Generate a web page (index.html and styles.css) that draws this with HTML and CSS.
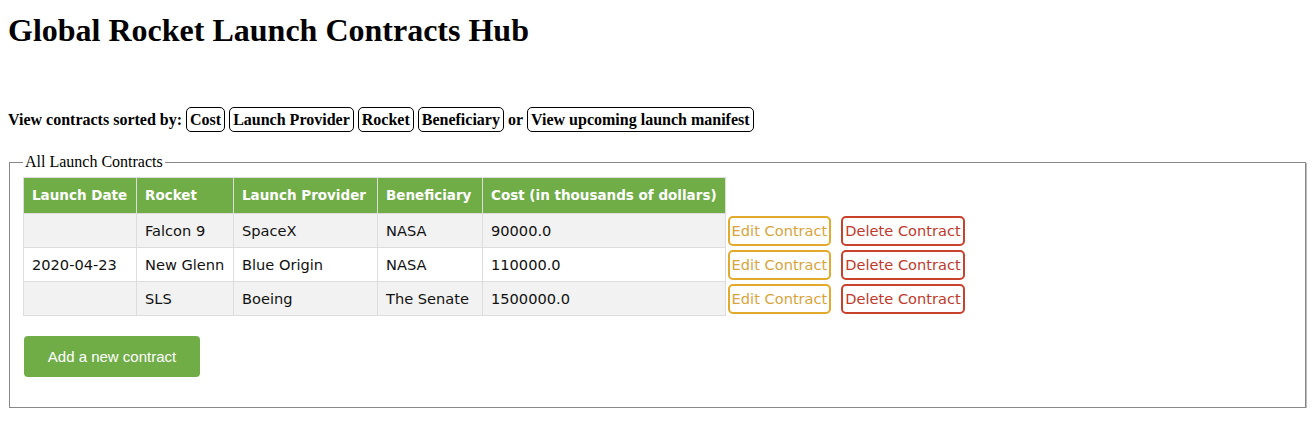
FILE: index.html
```html
<!DOCTYPE html>
<html>
<head>
<meta charset="utf-8">
<title>Global Rocket Launch Contracts Hub</title>
<link rel="stylesheet" href="styles.css">
</head>
<body>
<h1 class="title">Global Rocket Launch Contracts Hub</h1>
<div class="sortbar">
  <span class="label">View contracts sorted by:</span>
  <button class="sort">Cost</button>
  <button class="sort">Launch Provider</button>
  <button class="sort">Rocket</button>
  <button class="sort">Beneficiary</button>
  <span class="label">or</span>
  <button class="sort">View upcoming launch manifest</button>
</div>
<fieldset class="panel">
  <legend class="legend">All Launch Contracts</legend>
  <table class="contracts">
    <thead>
      <tr>
        <th class="c-date">Launch Date</th>
        <th class="c-rocket">Rocket</th>
        <th class="c-provider">Launch Provider</th>
        <th class="c-benef">Beneficiary</th>
        <th class="c-cost">Cost (in thousands of dollars)</th>
        <th class="blank"></th>
      </tr>
    </thead>
    <tbody>
      <tr class="odd">
        <td></td>
        <td>Falcon 9</td>
        <td>SpaceX</td>
        <td>NASA</td>
        <td>90000.0</td>
        <td class="actions"><button class="edit">Edit Contract</button><button class="delete">Delete Contract</button></td>
      </tr>
      <tr>
        <td>2020-04-23</td>
        <td>New Glenn</td>
        <td>Blue Origin</td>
        <td>NASA</td>
        <td>110000.0</td>
        <td class="actions"><button class="edit">Edit Contract</button><button class="delete">Delete Contract</button></td>
      </tr>
      <tr class="odd">
        <td></td>
        <td>SLS</td>
        <td>Boeing</td>
        <td>The Senate</td>
        <td>1500000.0</td>
        <td class="actions"><button class="edit">Edit Contract</button><button class="delete">Delete Contract</button></td>
      </tr>
    </tbody>
  </table>
  <button class="add">Add a new contract</button>
</fieldset>
</body>
</html>
```
FILE: styles.css
```css
body {
  margin: 8px;
  font-family: "Liberation Serif", "Times New Roman", serif;
  font-size: 16px;
  color: #000;
  background: #fff;
}
.title {
  font-size: 32px;
  font-weight: bold;
  margin: 0;
  padding-top: 4px;
  line-height: 37px;
}
.sortbar {
  display: flex;
  align-items: center;
  gap: 4px;
  margin-top: 58px;
  font-weight: bold;
  font-size: 16px;
}
.sort {
  font-family: "Liberation Serif", "Times New Roman", serif;
  font-weight: bold;
  font-size: 16px;
  background: #fff;
  color: #000;
  border: 1px solid #000;
  border-radius: 5px;
  padding: 2px 3px;
  height: 25px;
  line-height: 19px;
}
.panel {
  margin: 21px 1px 0 1px;
  padding: 6px 12px 30px 13px;
  border: 1px solid #888;
  box-shadow: 1px 1px 0 #bbb;
}
.legend {
  padding: 0 2px;
  font-size: 16px;
}
.contracts {
  border-collapse: collapse;
  font-family: "DejaVu Sans", Tahoma, sans-serif;
  font-size: 14.6px;
  color: #111;
}
.contracts th {
  background: #70ad47;
  color: #fff;
  font-weight: bold;
  font-size: 13.5px;
  text-align: left;
  padding: 8px;
  border: 1px solid #ddd;
  line-height: 19px;
  white-space: nowrap;
}
.contracts th.c-date { width: 96px; }
.contracts th.c-rocket { width: 80px; }
.contracts th.c-provider { width: 127px; }
.contracts th.c-benef { width: 88px; }
.contracts th.c-cost { width: 224px; }
.contracts th.blank {
  background: #fff;
  border: none;
}
.contracts td {
  padding: 8px;
  border: 1px solid #ddd;
  line-height: 17px;
}
.contracts tr.odd td {
  background: #f2f2f2;
}
.contracts tr.odd td.actions,
.contracts td.actions {
  background: #fff;
  border: none;
  padding: 0 0 0 2px;
  white-space: nowrap;
}
.edit, .delete {
  font-family: "DejaVu Sans", Tahoma, sans-serif;
  font-size: 14.6px;
  background: #fff;
  border: 2px solid;
  border-radius: 5px;
  padding: 2px 2px;
  height: 30px;
}
.edit {
  color: #daa43c;
  border-color: #e2aa2c;
}
.delete {
  color: #c0392b;
  border-color: #c8412c;
  margin-left: 10px;
}
.add {
  display: block;
  margin: 20px 0 0 1px;
  background: #70ad47;
  color: #fff;
  border: none;
  border-radius: 4px;
  width: 176px;
  height: 41px;
  font-family: "Liberation Sans", Arial, sans-serif;
  font-size: 15px;
}
```
